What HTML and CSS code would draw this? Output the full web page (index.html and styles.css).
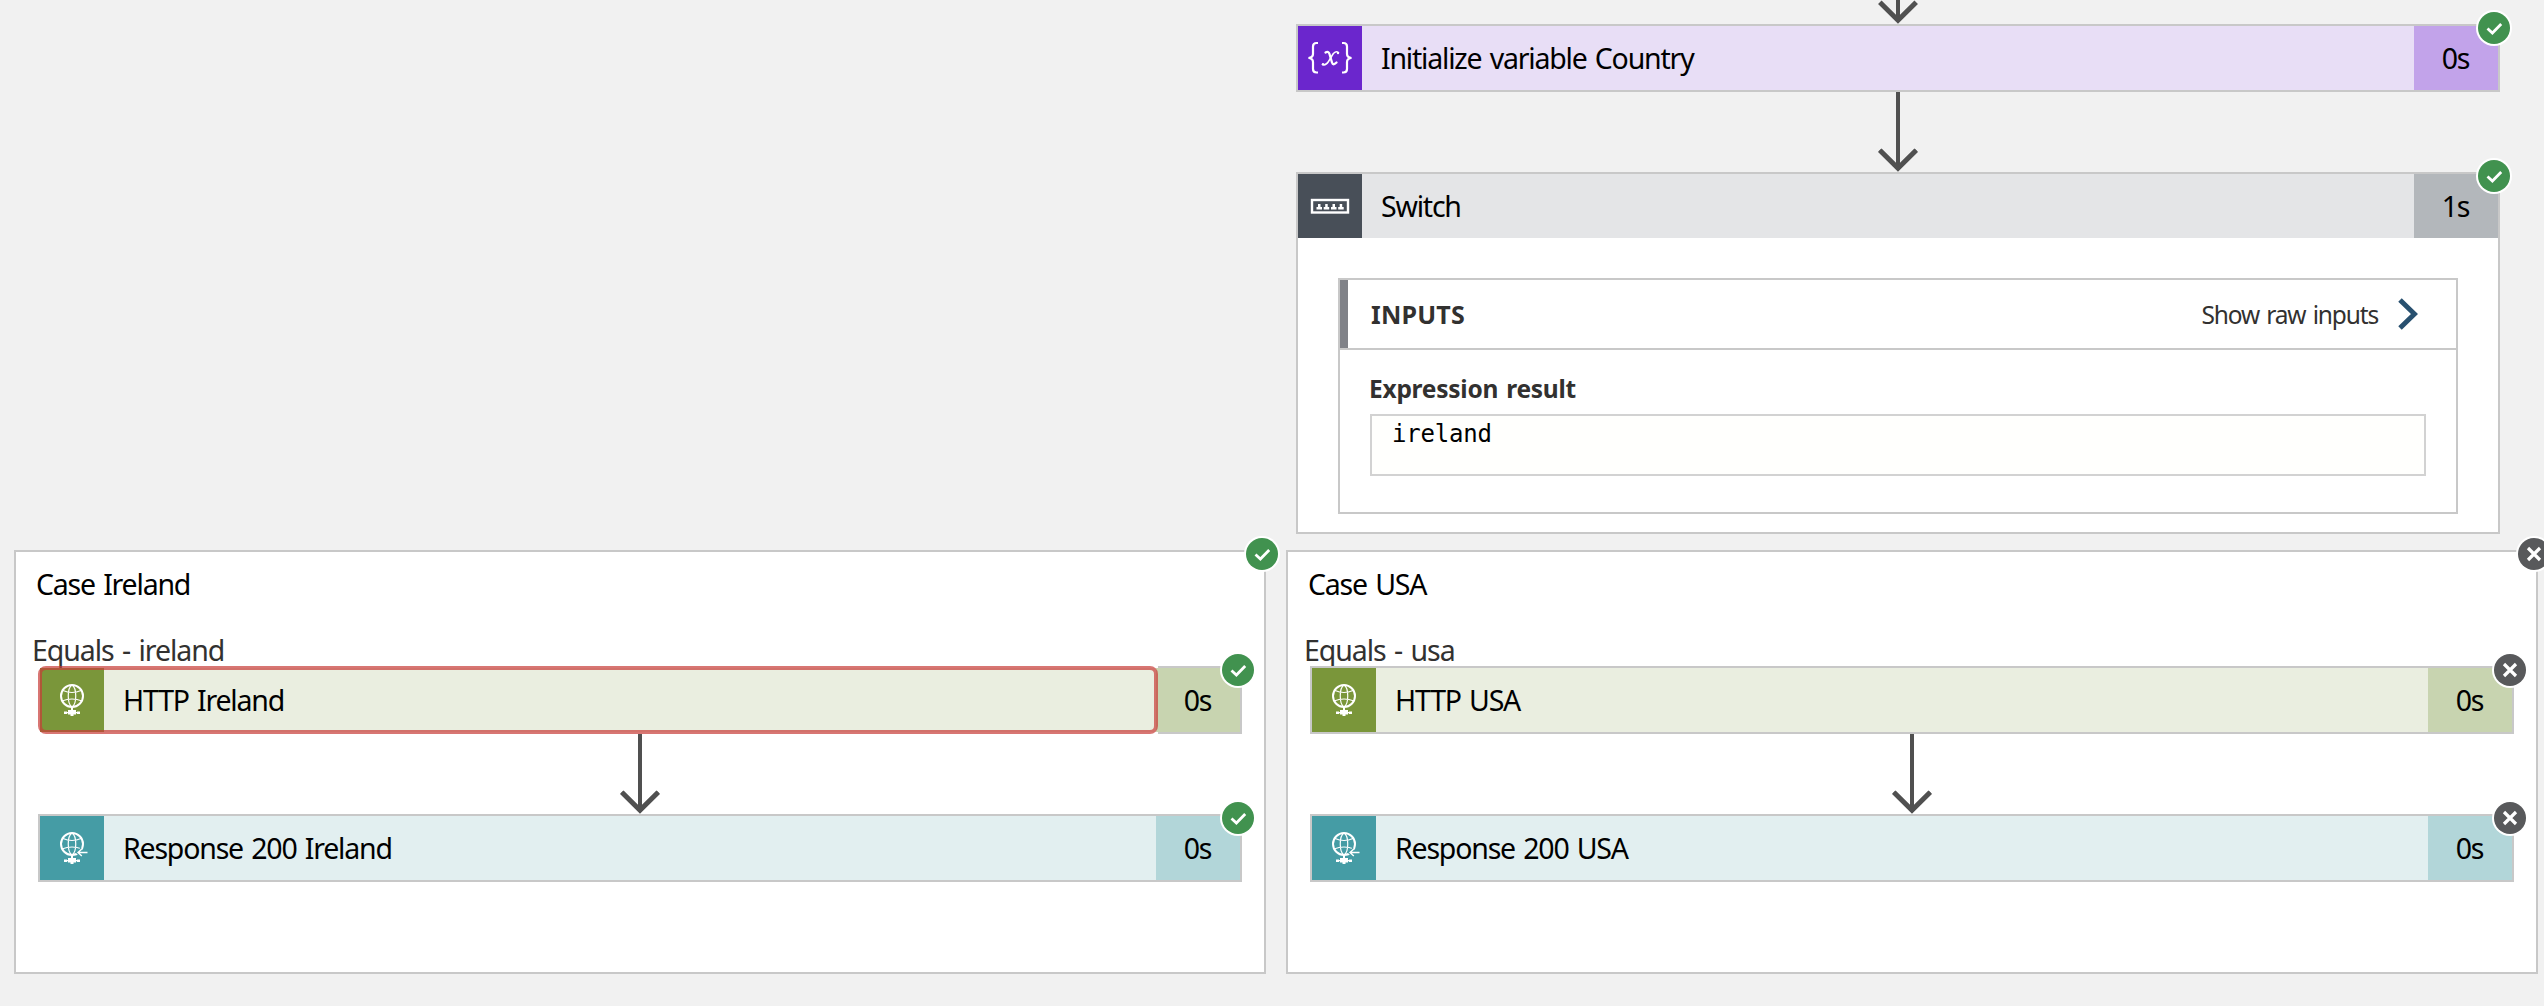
FILE: index.html
```html
<!DOCTYPE html>
<html lang="en">
<head>
<meta charset="utf-8">
<title>Logic app run</title>
<link rel="stylesheet" href="styles.css">
</head>
<body>
<svg class="defs" aria-hidden="true">
  <symbol id="arrow" viewBox="0 0 42 80"><path d="M21 0V75M2.8 58.2 21 76.3 39.2 58.2" fill="none" stroke="#505050" stroke-width="4"/><path d="M2.8 58.2 21 76.3 39.2 58.2" fill="none" stroke="#505050" stroke-width="5"/></symbol>
  <symbol id="check" viewBox="0 0 36 36"><circle cx="18" cy="18" r="18" fill="#fff"/><circle cx="18" cy="18" r="16" fill="#41924f"/><path d="M11.5 18.5 16.4 23 25.2 14" fill="none" stroke="#fff" stroke-width="2.8"/></symbol>
  <symbol id="cross" viewBox="0 0 36 36"><circle cx="18" cy="18" r="18" fill="#fff"/><circle cx="18" cy="18" r="16" fill="#58595b"/><path d="M12 12 24 24M24 12 12 24" fill="none" stroke="#fff" stroke-width="3.2"/></symbol>
  <symbol id="globe" viewBox="0 0 64 64"><g fill="none" stroke="#fff"><circle cx="32" cy="28" r="11" stroke-width="2"/><path d="M32 17C27 20 27 36 32 39M32 17C37 20 37 36 32 39M23 22.500Q32 26.500 41 22.500M22 33Q32 29 42 33" stroke-width="1.200"/></g><path d="M31 39h2v3h3v1h-8v-1h3zM28 42.500h8v4h-8zM24 43.500h3v2.500h-3zM37 43.500h3v2.500h-3zM27 44h10v1.200h-10zM30.500 46h3v2h-3z" fill="#fff"/></symbol>
  <symbol id="reply" viewBox="0 0 64 64"><path d="M47.500 36.500H38M41.800 33 38 36.500 41.800 40" fill="none" stroke="#459ca5" stroke-width="3.500"/><path d="M47.500 36.500H38M41.800 33 38 36.500 41.800 40" fill="none" stroke="#fff" stroke-width="1.400"/></symbol>
</svg>
<main class="canvas">
  <section class="trunk">
    <svg class="arrow-end" viewBox="0 56 42 24"><path d="M21 0V75" stroke="#505050" stroke-width="4"/><path d="M2.800 58.200 21 76.300 39.200 58.200" fill="none" stroke="#505050" stroke-width="5"/></svg>
    <article class="card variable">
      <div class="head">
        <div class="icon"><svg viewBox="0 0 64 64"><g fill="none" stroke="#fff" stroke-width="2.200"><path d="M20 17H18.500Q15 17 15 20.500V28Q15 31.500 10.500 32Q15 32.500 15 36V43Q15 46.500 18.500 46.500H20M44 17H45.500Q49 17 49 20.500V28Q49 31.500 53.500 32Q49 32.500 49 36V43Q49 46.500 45.500 46.500H44"/></g><g fill="none" stroke="#fff" stroke-linecap="round"><path d="M27.500 26.500Q30.500 24.800 31.500 28L34 36.500Q35 40 38.500 36.500" stroke-width="2.300"/><path d="M40.500 26.500Q37.500 24.500 35 28L30.500 35.500Q27.500 40 24.500 38.500" stroke-width="1.500"/></g><circle cx="40" cy="27" r="1.200" fill="#fff"/><circle cx="25" cy="38.200" r="1.200" fill="#fff"/></svg></div>
        <div class="title">Initialize variable Country</div>
        <div class="time">0s</div>
      </div>
      <svg class="badge"><use href="#check"/></svg>
    </article>
    <svg class="arrow"><use href="#arrow"/></svg>
    <article class="card switch">
      <div class="head">
        <div class="icon"><svg viewBox="0 0 64 64"><rect x="14" y="26" width="36" height="12.500" fill="none" stroke="#fff" stroke-width="2.400"/><path d="M18.500 35.500v-2.500h1.500v-3h2.500v3h1.500v2.500zM25.700 35.500v-2.500h1.500v-3h2.500v3h1.500v2.500zM33 35.500v-2.500h1.500v-3h2.500v3h1.500v2.500zM40.200 35.500v-2.500h1.500v-3h2.500v3h1.500v2.500z" fill="#fff"/></svg></div>
        <div class="title">Switch</div>
        <div class="time">1s</div>
      </div>
      <div class="details">
        <div class="panel">
          <div class="panel-head">
            <span class="panel-title">INPUTS</span>
            <span class="raw">Show raw inputs</span>
            <svg class="chevron" viewBox="0 0 20 32"><path d="M2 2 16.500 16 2 30" fill="none" stroke="#28506f" stroke-width="5"/></svg>
          </div>
          <div class="panel-body">
            <div class="label">Expression result</div>
            <div class="value">ireland</div>
          </div>
        </div>
      </div>
      <svg class="badge"><use href="#check"/></svg>
    </article>
  </section>
  <section class="cases">
    <article class="case">
      <h2 class="case-title">Case Ireland</h2>
      <p class="condition">Equals - ireland</p>
      <div class="card http selected">
        <div class="head">
          <div class="icon"><svg><use href="#globe"/></svg></div>
          <div class="title">HTTP Ireland</div>
          <div class="time">0s</div>
        </div>
        <svg class="badge"><use href="#check"/></svg>
      </div>
      <svg class="arrow"><use href="#arrow"/></svg>
      <div class="card response">
        <div class="head">
          <div class="icon"><svg><use href="#globe"/><use href="#reply"/></svg></div>
          <div class="title">Response 200 Ireland</div>
          <div class="time">0s</div>
        </div>
        <svg class="badge"><use href="#check"/></svg>
      </div>
      <svg class="badge"><use href="#check"/></svg>
    </article>
    <article class="case">
      <h2 class="case-title">Case USA</h2>
      <p class="condition">Equals - usa</p>
      <div class="card http">
        <div class="head">
          <div class="icon"><svg><use href="#globe"/></svg></div>
          <div class="title">HTTP USA</div>
          <div class="time">0s</div>
        </div>
        <svg class="badge"><use href="#cross"/></svg>
      </div>
      <svg class="arrow"><use href="#arrow"/></svg>
      <div class="card response">
        <div class="head">
          <div class="icon"><svg><use href="#globe"/><use href="#reply"/></svg></div>
          <div class="title">Response 200 USA</div>
          <div class="time">0s</div>
        </div>
        <svg class="badge"><use href="#cross"/></svg>
      </div>
      <svg class="badge"><use href="#cross"/></svg>
    </article>
  </section>
</main>
</body>
</html>
```
FILE: styles.css
```css
*, *::after { box-sizing: border-box; }
body {
  margin: 0;
  background: #f1f1f1;
  color: #000;
  font: 28.5px/38px "Noto Sans", sans-serif;
  letter-spacing: -1.2px;
  word-spacing: 2px;
}
svg { display: block; }
.defs { position: absolute; width: 0; height: 0; }
.canvas { width: 2544px; height: 1006px; overflow: hidden; }

.trunk {
  display: flex;
  flex-direction: column;
  align-items: center;
  width: 1204px;
  margin-left: 1296px;
}
.arrow { width: 42px; height: 80px; }
.arrow-end { width: 42px; height: 24px; }

.card {
  position: relative;
  width: 1204px;
  border: 2px solid #c8c8c8;
  background: #fff;
}
.head { display: flex; height: 64px; background: var(--tint); }
.icon { width: 64px; background: var(--main); }
.icon svg { width: 64px; height: 64px; }
.title { flex: 1; padding: 13px 0 0 19px; }
.time { width: 84px; padding: 13px 1px 0 0; text-align: center; background: var(--time); }
.variable { --main: #6b26cd; --tint: #e8def6; --time: #c2a3ea; }
.switch { --main: #484f58; --tint: #e4e5e7; --time: #b3b7bb; }
.http { --main: #7a963a; --tint: #eaeee0; --time: #c8d4b0; }
.response { --main: #459ca5; --tint: #e2eff0; --time: #b2d6d9; }

.badge { position: absolute; top: -16px; right: -16px; width: 36px; height: 36px; }
.trunk .badge { right: -14px; }

.details { padding: 40px 40px 18px; }
.panel { height: 236px; border: 2px solid #c8c8c8; }
.panel-head {
  display: flex;
  align-items: center;
  height: 70px;
  padding: 0 38px 0 22px;
  border-bottom: 2px solid #c8c8c8;
  box-shadow: inset 8px 0 #808288;
  color: #323130;
  font-size: 24.5px;
  letter-spacing: -1.15px;
}
.raw { padding-top: 2px; }
.panel-title { flex: 1; padding-left: 9px; font-size: 25px; font-weight: 700; letter-spacing: 0.2px; }
.chevron { width: 20px; height: 32px; margin-left: 20px; }
.panel-body { padding: 20px 30px; }
.label {
  margin: 0 0 6px -1px;
  color: #323130;
  font-size: 24.5px;
  font-weight: 700;
  letter-spacing: -0.25px;
}
.value {
  height: 62px;
  padding-left: 20px;
  border: 2px solid #d2d2d2;
  background: #fffffd;
  font: 24px/36px "DejaVu Sans Mono", monospace;
  letter-spacing: -0.2px;
}

.cases { display: flex; gap: 20px; width: 2524px; margin: 16px 0 0 14px; }
.case {
  position: relative;
  flex: none;
  width: 1252px;
  height: 424px;
  padding: 12px 22px;
  border: 2px solid #c8c8c8;
  background: #fff;
}
.case-title { margin: 0 0 28px -2px; padding-top: 1px; font: inherit; }
.condition { margin: 0 0 -3px -6px; color: #323130; height: 38px; letter-spacing: -1.05px; }
.case .arrow { margin: 0 auto; }

.selected { border-color: transparent #c8c8c8 transparent transparent; background: none; }
.selected .time { box-shadow: 2px 2px #c8c8c8, 2px -2px #c8c8c8; }
.selected::after {
  content: "";
  position: absolute;
  top: -2px;
  left: -2px;
  width: 1120px;
  height: 68px;
  border: 4px solid rgba(200, 60, 56, 0.7);
  border-radius: 8px;
}
```
